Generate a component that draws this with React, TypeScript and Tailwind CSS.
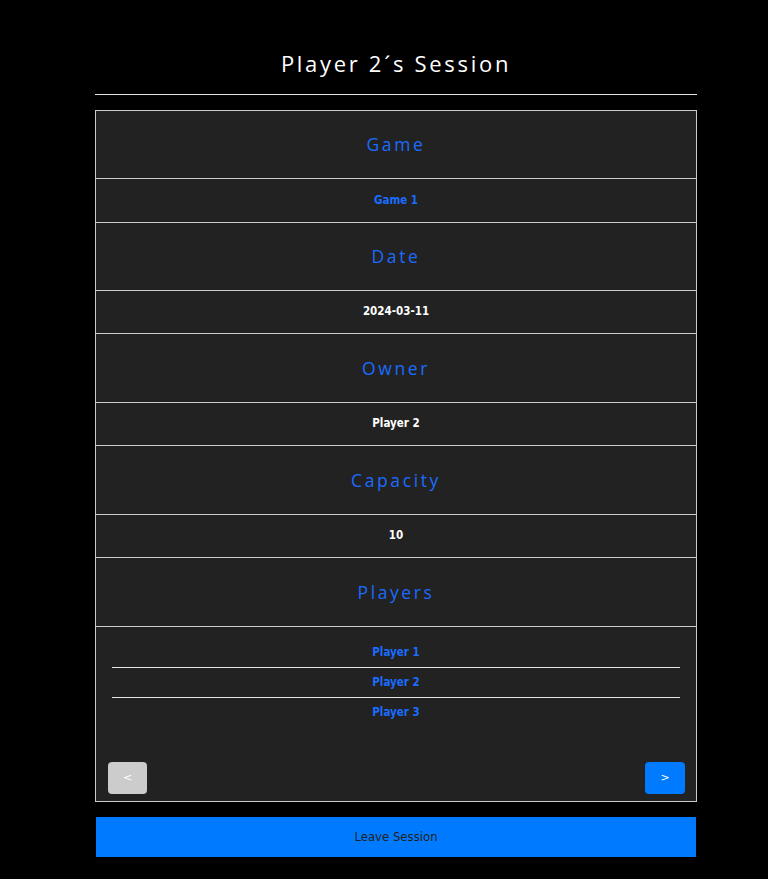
const rows = [
  { label: 'Game', value: 'Game 1', blue: true, head: 'h-[68px] pb-[1px]', body: 'h-[44px]' },
  { label: 'Date', value: '2024-03-11', head: 'h-[68px] pb-[1px]', body: 'h-[43px]' },
  { label: 'Owner', value: 'Player 2', head: 'h-[69px]', body: 'h-[43px]' },
  { label: 'Capacity', value: '10', head: 'h-[69px]', body: 'h-[43px]' },
]

const players = ['Player 1', 'Player 2', 'Player 3']

export default function App() {
  return (
    <div className="min-h-screen w-full bg-black">
      <div className="ml-[95px] w-[602px] pb-[22px]">
        {/* Title */}
        <h1 className="pt-[46px] text-center text-[22px] leading-[34px] tracking-[2.7px] text-white font-['Open_Sans',sans-serif]">
          Player 2´s Session
        </h1>
        <div className="mt-[14px] h-px bg-[#e5e5e5]" />

        {/* Session details */}
        <div className="mt-[15px] border border-[#cccccc] bg-[#222222]">
          {rows.map((r) => (
            <div key={r.label}>
              <div
                className={`flex items-center justify-center border-b border-[#cccccc] text-[17.5px] tracking-[2.6px] text-[#1a6cff] font-['Open_Sans',sans-serif] ${r.head}`}
              >
                {r.label}
              </div>
              <div
                className={`flex items-center justify-center border-b border-[#cccccc] text-[11.5px] font-bold font-['DejaVu_Sans_Condensed','DejaVu_Sans',sans-serif] ${r.body} ${
                  r.blue ? 'text-[#1a6cff]' : 'text-white'
                }`}
              >
                {r.value}
              </div>
            </div>
          ))}
          <div className="flex h-[69px] items-center justify-center border-b border-[#cccccc] text-[17.5px] tracking-[2.6px] text-[#1a6cff] font-['Open_Sans',sans-serif]">
            Players
          </div>

          {/* Players list */}
          <div className="px-4 pt-[11px]">
            {players.map((p, i) => (
              <div
                key={p}
                className={`flex h-[30px] items-center justify-center text-[11.5px] font-bold text-[#1a6cff] font-['DejaVu_Sans_Condensed','DejaVu_Sans',sans-serif] ${
                  i < players.length - 1 ? 'border-b border-[#e5e5e5]' : ''
                }`}
              >
                {p}
              </div>
            ))}
          </div>
          <div className="mt-[34px] flex items-center justify-between pb-[7px] pl-[12px] pr-[11px]">
            <button className="h-[32px] w-[39px] rounded-[4px] bg-[#cccccc] text-[11px] text-white font-['DejaVu_Sans',sans-serif]">
              &lt;
            </button>
            <button className="h-[32px] w-[40px] rounded-[4px] bg-[#007bff] text-[11px] text-white font-['DejaVu_Sans',sans-serif]">
              &gt;
            </button>
          </div>
        </div>

        <button className="mt-[15px] ml-px h-[40px] w-[600px] bg-[#007bff] text-[13px] text-[#222222] font-['DejaVu_Sans_Condensed','DejaVu_Sans',sans-serif]">
          Leave Session
        </button>
      </div>
    </div>
  )
}
